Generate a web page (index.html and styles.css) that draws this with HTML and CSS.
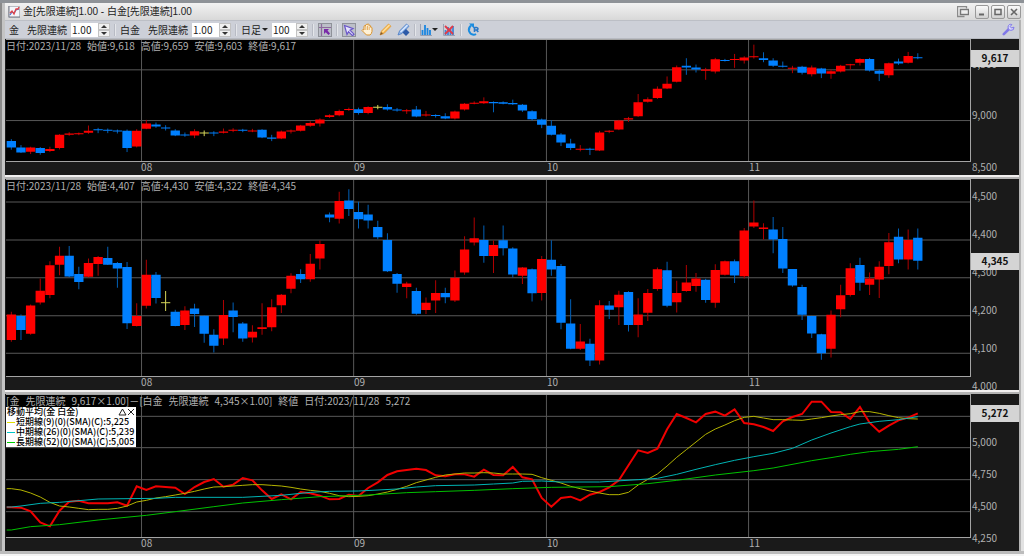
FILE: index.html
```html
<!DOCTYPE html>
<html lang="ja">
<head>
<meta charset="utf-8">
<title>金[先限連続]1.00 - 白金[先限連続]1.00</title>
<link rel="stylesheet" href="styles.css">
</head>
<body>
<div class="window">
  <header class="titlebar">
    <svg class="app-icon" width="12" height="12" viewBox="0 0 12 12"><rect x="0.5" y="0.5" width="11" height="11" fill="#f4f6fa" stroke="#b9bcc4"/><path d="M1 0v11h11" fill="none" stroke="#777b85"/><path d="M2 9l2-3 2 1 2-3 3-1" fill="none" stroke="#4a6fd0" stroke-width="1.2"/><path d="M2 7l2-2 2 3 2-5 2 0 1-2" fill="none" stroke="#e0454a" stroke-width="1.3"/></svg>
    <h1 class="title">金[先限連続]1.00 - 白金[先限連続]1.00</h1>
    <button class="pop-button" aria-label="別ウィンドウ"><svg width="12" height="12" viewBox="0 0 12 12"><path d="M7.500 10.500h-7V.5h9v2" fill="none" stroke="#8a8a8a" stroke-width="1.300"/><rect x="3.500" y="3.500" width="8" height="5" fill="#eee" stroke="#777" stroke-width="1.400"/></svg></button>
    <div class="window-buttons">
      <button class="window-button" aria-label="最小化"><svg width="10" height="10" viewBox="0 0 10 10"><path d="M2 7.500h5" stroke="#666" stroke-width="2"/></svg></button>
      <button class="window-button" aria-label="最大化"><svg width="10" height="10" viewBox="0 0 10 10"><rect x="2" y="2.500" width="6" height="5" fill="none" stroke="#666" stroke-width="1.500"/></svg></button>
      <button class="window-button" aria-label="閉じる"><svg width="10" height="10" viewBox="0 0 10 10"><path d="M2 2l6 6M8 2l-6 6" stroke="#666" stroke-width="1.600"/></svg></button>
    </div>
  </header>

  <div class="toolbar">
    <span class="label">金</span>
    <label class="label" for="ratio-a">先限連続</label>
    <span class="stepper"><input id="ratio-a" type="text" value="1.00"><span class="steps"><button aria-label="増やす" class="step up"></button><button aria-label="減らす" class="step down"></button></span></span>
    <i class="divider"></i>
    <span class="label">白金</span>
    <label class="label" for="ratio-b">先限連続</label>
    <span class="stepper"><input id="ratio-b" type="text" value="1.00"><span class="steps"><button aria-label="増やす" class="step up"></button><button aria-label="減らす" class="step down"></button></span></span>
    <i class="divider"></i>
    <span class="period"><select aria-label="足種"><option>日足</option></select></span>
    <span class="stepper count"><input aria-label="本数" type="text" value="100"><span class="steps"><button aria-label="増やす" class="step up"></button><button aria-label="減らす" class="step down"></button></span></span>
    <i class="divider"></i>
    <button class="tool pressed" aria-label="十字線"><svg width="12" height="12" viewBox="0 0 12 12"><path d="M2.500 0v12M0 3.500h12" stroke="#8d6a9c" stroke-width="1.200"/><path d="M5 5h5l-1.500 1.500L11 9.500 9.500 11 6.700 8.200 5 10z" fill="#7a2aa8"/></svg></button>
    <i class="divider"></i>
    <button class="tool pressed" aria-label="選択"><svg width="12" height="12" viewBox="0 0 12 12"><path d="M1.500 1.500l8.500 3.200-3 1.500 4 4-1.500 1.500-4-4L4 10.500z" fill="#e6e4ff" stroke="#6a56c8" stroke-width="1.200"/></svg></button>
    <button class="tool" aria-label="移動"><svg width="13" height="13" viewBox="0 0 13 13"><path d="M3 7V3.200q.8-1 1.500 0V2q.9-1.200 1.700 0V1.300q1-1 1.700.2v1q1-.8 1.700.3v1.400q1.200-.4 1.400.8v3.500q-.5 2.500-2 3.500H5.500Q3.500 10 1 7.500q.5-1.700 2-.5z" fill="#fff2d8" stroke="#d9932e"/><path d="M4.800 3.500V7M6.500 3v4M8.200 3.500V7" stroke="#dfa04a" stroke-width=".8"/></svg></button>
    <button class="tool" aria-label="描画"><svg width="13" height="13" viewBox="0 0 13 13"><path d="M1 12l1.500-4L9.500 1 12 3.300 5 10.500z" fill="#f6b54a" stroke="#e09a3a" stroke-width=".8"/><path d="M3.500 9L10.500 2" stroke="#ffe0a0" stroke-width="1.200"/><path d="M1 12l1-3 2 1.800z" fill="#805a30"/></svg></button>
    <button class="tool" aria-label="線の編集"><svg width="13" height="13" viewBox="0 0 13 13"><path d="M1 12l1.500-4L9.500 1 12 3.300 5 10.500z" fill="#8eb4e8" stroke="#4b7cc4" stroke-width=".8"/><path d="M3.500 9L10.500 2" stroke="#dceaff" stroke-width="1.200"/><path d="M9 6l3.500 3.500L9 13 5.500 9.500z" fill="#2c5aa8"/></svg></button>
    <i class="divider"></i>
    <button class="tool menu" aria-label="指標"><svg width="12" height="12" viewBox="0 0 12 12"><path d="M.5 0v11.500H12" fill="none" stroke="#9aa0b0"/><path d="M2.500 11V6M5 11V1M7.500 11V4M10 11V6" stroke="#1b86e0" stroke-width="1.800"/></svg></button>
    <button class="tool" aria-label="指標の削除"><svg width="12" height="12" viewBox="0 0 12 12"><path d="M.5 0v11.500H12" fill="none" stroke="#9aa0b0"/><path d="M2.500 11V6M5 11V3M7.500 11V5M10 11V2" stroke="#3f86d8" stroke-width="1.800"/><path d="M2 2l8 8M10 2l-8 8" stroke="#e03a48" stroke-width="1.800"/></svg></button>
    <i class="divider"></i>
    <button class="tool" aria-label="更新"><svg width="13" height="13" viewBox="0 0 13 13"><path d="M4 2.500Q1.200 5 2 8q1.200 3.500 4.500 3.700 1.500 0 2.500-.7" fill="none" stroke="#1a8ce0" stroke-width="2"/><path d="M2 .5h5v5z" fill="#1a8ce0"/><path d="M7.500 9V4.500h2q1.500.2 1.500 1.300T9.500 7h-2M9.500 7l1.800 2" fill="none" stroke="#2878c8" stroke-width="1.600"/></svg></button>
    <button class="tool settings" aria-label="設定"><svg width="13" height="13" viewBox="0 0 13 13"><path d="M1.800 11.200L7 6" stroke="#8078e8" stroke-width="2.600" stroke-linecap="round"/><path d="M9.800 1.500A3 3 0 1 0 12 4.200L9.500 5 8.200 3.600z" fill="#d8d6ff" stroke="#8078e8"/></svg></button>
  </div>

  <main class="panels">
    <section class="panel gold">
      <div class="plot">
        <svg class="chart" id="gold" viewBox="0 -60 2895 365" preserveAspectRatio="none"></svg>
        <p class="info"><span>日付:2023/11/28</span><span>始値:9,618</span><span>高値:9,659</span><span>安値:9,603</span><span>終値:9,617</span></p>
      </div>
      <div class="axis"><span>9,500</span><span>9,000</span><span>8,500</span><b class="tag">9,617</b></div>
      <div class="months"><span>08</span><span>09</span><span>10</span><span>11</span></div>
    </section>
    <div class="splitter"></div>
    <section class="panel platinum">
      <div class="plot">
        <svg class="chart" id="platinum" viewBox="0 9 2895 595" preserveAspectRatio="none"></svg>
        <p class="info"><span>日付:2023/11/28</span><span>始値:4,407</span><span>高値:4,430</span><span>安値:4,322</span><span>終値:4,345</span></p>
      </div>
      <div class="axis"><span>4,500</span><span>4,400</span><span>4,300</span><span>4,200</span><span>4,100</span><span>4,000</span><b class="tag">4,345</b></div>
      <div class="months"><span>08</span><span>09</span><span>10</span><span>11</span></div>
    </section>
    <div class="splitter"></div>
    <section class="panel spread">
      <div class="plot">
        <svg class="chart" id="spread" viewBox="0 14 2895 426" preserveAspectRatio="none"></svg>
        <p class="info"><span>[金</span><span>先限連続</span><span>9,617×1.00]－[白金</span><span>先限連続</span><span>4,345×1.00]</span><span>終値</span><span>日付:2023/11/28</span><span>5,272</span></p>
        <div class="legend">
          <div class="legend-head"><span>移動平均(金 白金)</span><span class="legend-buttons"><button aria-label="たたむ"><svg width="9" height="8" viewBox="0 0 9 8"><path d="M4.500 1L8 7H1z" fill="none" stroke="#222"/></svg></button><button aria-label="消す"><svg width="8" height="8" viewBox="0 0 8 8"><path d="M1 1l6 6M7 1L1 7" stroke="#222"/></svg></button></span></div>
          <div class="legend-row short">短期線(9)(0)(SMA)(C):5,225</div>
          <div class="legend-row middle">中期線(26)(0)(SMA)(C):5,239</div>
          <div class="legend-row long">長期線(52)(0)(SMA)(C):5,005</div>
        </div>
      </div>
      <div class="axis"><span>5,250</span><span>5,000</span><span>4,750</span><span>4,500</span><span>4,250</span><b class="tag">5,272</b></div>
      <div class="months"><span>08</span><span>09</span><span>10</span><span>11</span></div>
    </section>
  </main>
</div>
<script src="charts.js"></script>
</body>
</html>
```
FILE: styles.css
```css
* { box-sizing: border-box; }

body {
  margin: 0;
  background: #fff;
  font-family: "Noto Sans CJK JP", sans-serif;
  font-size: 10px;
  line-height: 12px;
}

button {
  margin: 0;
  padding: 0;
  border: 0;
  background: none;
  font: inherit;
}

svg { display: block; }

.window {
  display: flex;
  flex-direction: column;
  height: 100vh;
  min-height: 400px;
  padding: 0 5px 5px;
  border-top: 3px solid #8e9297;
  background:
    linear-gradient(#bcbcbc 0 3px, #f4f4f4 3px) bottom / 100% 5px no-repeat,
    linear-gradient(90deg, #8a8a8a 0 2px, #c4c4c4 2px 5px, #dcdcdc 5px calc(100% - 5px), #b4b4b4 calc(100% - 5px) calc(100% - 3px), #e2e2e2 calc(100% - 3px));
}

.titlebar {
  display: flex;
  align-items: center;
  flex: none;
  height: 17px;
  margin-right: -2px;
  padding-left: 3px;
  background: linear-gradient(#f2f2f2, #d8d8d8);
}

.title {
  flex: 1;
  margin: 0 0 0 3px;
  color: #222;
  font-family: "Liberation Sans", "Noto Sans CJK JP", sans-serif;
  font-size: 10px;
  font-weight: 400;
}

.pop-button { margin-right: 6px; }
.window-buttons { display: flex; gap: 2px; }

.window-button {
  display: grid;
  place-items: center;
  width: 14px;
  height: 14px;
  border: 1px solid #999;
  border-radius: 2px;
  background: linear-gradient(#fafafa, #d0d0d0);
}

.toolbar {
  display: flex;
  align-items: center;
  flex: none;
  gap: 4px;
  height: 19px;
  padding: 0 4px;
  border-top: 1px solid #bcbfc6;
  border-bottom: 1px solid #b8bbc2;
  background: #cdd0d8;
  color: #222;
}

.toolbar .label + .label { margin-left: 4px; }
.toolbar > * { flex: none; }

.divider {
  width: 2px;
  height: 12px;
  border-left: 1px solid #b8bbc4;
  background: #e4e6ea;
}

.stepper {
  display: flex;
  width: 39px;
  height: 14px;
  background: #fff;
}

.stepper.count { width: 36px; }

.stepper input {
  flex: 1;
  min-width: 0;
  padding: 0 1px;
  border: 0;
  background: #fff;
  color: #222;
  font: 10px/12px "Noto Sans CJK JP", sans-serif;
}

.steps {
  display: flex;
  flex-direction: column;
  width: 12px;
}

.step {
  display: grid;
  flex: 1;
  place-items: center;
  border: 1px solid #c2c2c2;
  background: #f0f0f0;
}

.step::before {
  border: 3px solid transparent;
  border-top-width: 0;
  border-bottom: 3px solid #333;
  content: "";
}

.step.down::before { transform: rotate(180deg); }

.period {
  display: flex;
  align-items: center;
  gap: 1px;
}

.period::after,
.menu::after {
  border: 3px solid transparent;
  border-top-color: #222;
  border-bottom-width: 0;
  content: "";
}

.period select {
  width: 20px;
  padding: 0;
  border: 0;
  appearance: none;
  background: none;
  color: #222;
  font: inherit;
}

.tool {
  display: grid;
  place-items: center;
  width: 14px;
  height: 14px;
}

.tool.pressed {
  border: 1px solid #8f9299;
  background: #bcbfc8;
}

.menu {
  grid-auto-flow: column;
  width: 18px;
}

.settings { margin-left: auto; }

.panels {
  display: flex;
  flex: 1;
  flex-direction: column;
  min-height: 0;
}

.panel {
  display: grid;
  grid-template-rows: minmax(0, 1fr) 13px;
  grid-template-columns: minmax(0, 1fr) 48px;
  min-height: 0;
  overflow: hidden;
  border-left: 1px solid #1a1a1a;
  background: #1a1a1a;
  color: #b0b0b0;
}

.gold { flex: 136 1 0; }
.platinum { flex: 211 1 0; }
.spread { flex: 157 1 0; }

.splitter {
  flex: none;
  height: 4px;
  border-bottom: 2px solid #b4b4b4;
  background: #f2f0f0;
}

.plot {
  position: relative;
  min-height: 0;
  border: 1px solid #a4a4a4;
  border-left: 0;
  background: #000;
}

.chart {
  width: 100%;
  height: 100%;
}

.grid-line,
.month-line {
  fill: none;
  stroke: #585858;
  vector-effect: non-scaling-stroke;
}

.wick { fill: none; vector-effect: non-scaling-stroke; }
.wick.up { stroke: #b00000; }
.wick.down { stroke: #0060b8; }
.wick.even { stroke: #d6d65a; }
.body.up { fill: #f00; }
.body.down { fill: #0080ff; }
.body.even { fill: #d6d65a; }

.line { fill: none; vector-effect: non-scaling-stroke; }
.line.price { stroke: #f00000; stroke-width: 2px; }
.line.short { stroke: #b4b400; }
.line.middle { stroke: #00b4b4; }
.line.long { stroke: #00c000; }

.info {
  position: absolute;
  top: 0;
  left: 0;
  display: flex;
  gap: 6px;
  margin: 0;
  line-height: 11px;
}

.axis {
  position: relative;
  display: grid;
  grid-row: 1 / 3;
  grid-column: 2;
  align-items: end;
  padding-left: 1px;
  white-space: nowrap;
}

.gold .axis { grid-template-rows: 31fr 51fr 52fr 2fr; }
.platinum .axis { grid-template-rows: 11% repeat(5, 18%); }
.spread .axis { grid-template-rows: 22fr repeat(4, 32fr) 7fr; }

.tag {
  position: absolute;
  right: 0;
  left: 0;
  height: 17px;
  background: #d4d4d4;
  color: #111;
  line-height: 16px;
  text-align: center;
}

.gold .tag { top: 8%; }
.platinum .tag { top: 35%; }
.spread .tag { top: 7%; }

.months {
  display: grid;
  grid-template-columns: 213fr 193fr 202fr 222fr;
  margin-left: 14%;
  line-height: 10px;
}

.legend {
  position: absolute;
  top: 12px;
  left: 0;
  width: 130px;
  padding: 0 1px;
  background: #fff;
  color: #000;
  font-size: 9px;
  font-weight: 500;
  line-height: 10px;
  white-space: nowrap;
}

.legend-head {
  display: flex;
  justify-content: space-between;
}

.legend-buttons { display: flex; }

.legend-row {
  display: flex;
  align-items: center;
  gap: 1px;
}

.legend-row::before {
  width: 8px;
  height: 1px;
  content: "";
}

.legend-row.short::before { background: #e0e000; }
.legend-row.middle::before { background: #00c8c8; }
.legend-row.long::before { background: #00d000; }
```
FILE: charts.js
```js
// Chart units: one day is STEP wide, y grows downwards.
const STEP = 28.96, FIRST = 16, WIDTH = 2895;
const MONTHS = [407, 1044, 1623, 2230];
const KIND = { r: "up", b: "down", y: "even" };
const dayX = i => FIRST + STEP * i;

// One candle per entry: kind, body top, body bottom, high, low.
const gold = `b 245 264 239 271,b 264 279 257 281,r 264 277 262 284,b 266 281 263 286,r 269 275 262 278,r 226 266 224 270,r 222 226 218 229,r 221 223 219 227,r 214 220 198 223,b 209 212 205 221,b 211 213 207 221,b 213 215 210 222,b 214 266 210 278,r 214 261 209 264,r 192 208 181 209,b 195 201 189 205,b 204 206 197 213,b 213 228 209 230,b 225 228 219 232,r 215 228 209 236,y 219 221 213 230,b 219 222 215 230,r 216 220 207 222,r 211 213 206 218,b 211 213 208 218,r 213 215 208 218,b 211 234 209 236,b 234 238 226 245,r 216 237 213 239,r 213 216 210 222,r 198 214 196 216,r 190 199 185 202,r 180 192 176 201,r 167 172 164 175,r 154 167 150 170,r 148 151 144 154,b 149 160 144 165,r 142 160 140 164,y 141 143 136 149,b 142 150 134 153,b 150 153 145 156,r 152 155 148 163,b 150 171 139 173,r 165 167 154 171,b 166 169 164 174,b 170 177 161 179,r 156 177 153 180,r 132 150 130 153,r 129 131 125 134,r 125 131 113 133,b 127 131 125 158,b 128 132 125 134,b 130 134 120 136,b 135 153 133 157,b 155 179 152 183,b 180 196 177 206,b 199 226 182 228,b 225 249 221 260,b 252 266 238 272,r 268 271 257 276,b 268 271 265 287,r 219 273 214 275,r 214 216 212 221,r 183 210 181 212,r 176 180 172 187,r 128 170 103 172,r 119 126 113 129,r 87 115 80 118,r 72 86 50 88,r 22 66 17 68,b 18 23 -5 45,b 23 29 14 38,r 29 33 24 60,r -2 35 -6 41,b 0 3 -3 5,r -3 0 -18 24,r -7 2 -11 11,r -11 -8 -46 -4,b -5 0 -23 7,b 2 18 -5 21,b 18 21 5 23,r 24 27 18 40,b 21 39 18 44,r 23 43 17 50,b 26 41 24 55,r 34 42 29 57,r 18 35 15 38,r 13 16 12 29,r -3 9 -5 17,b -3 32 -6 35,b 33 42 29 64,r 10 46 8 54,b 5 11 -4 15,r -12 9 -24 11,b -8 -5 -20 -2`;

const platinum = `r 417 495 409 500,b 422 464 417 495,r 390 476 387 479,r 345 381 308 387,r 268 358 256 368,r 239 266 212 298,b 239 302 209 304,b 294 319 272 341,r 261 303 247 305,r 243 264 240 300,b 246 266 212 267,b 261 278 258 336,b 273 444 258 461,r 422 452 383 454,r 297 391 251 399,b 297 367 288 384,y 380 382 346 407,b 409 452 403 453,r 405 449 392 464,b 399 416 385 455,b 421 476 420 503,b 479 512 462 533,r 419 490 373 510,b 405 425 381 471,b 445 490 440 500,r 470 487 450 502,r 456 461 383 479,r 395 456 371 468,r 357 389 355 413,r 300 339 292 353,b 294 310 280 322,r 263 310 234 318,r 203 247 193 281,b 114 123 108 137,r 73 127 45 141,b 71 97 37 118,b 106 128 75 156,b 114 132 84 156,b 152 183 133 189,b 191 286 171 288,b 294 324 291 351,r 323 334 318 368,b 346 415 336 418,r 382 404 366 416,r 352 375 313 413,b 352 365 336 383,r 306 375 284 379,r 220 290 180 297,r 186 199 123 208,b 191 240 147 260,r 206 240 193 291,b 192 216 147 238,b 217 296 213 305,r 275 300 273 325,b 280 353 278 378,r 249 352 240 375,b 251 281 192 300,b 270 442 264 462,b 445 521 371 523,r 499 521 446 525,b 506 557 491 574,r 389 557 374 569,b 390 403 376 431,r 357 395 345 449,b 349 449 347 469,r 417 449 368 486,r 352 412 340 437,r 280 340 275 345,b 283 391 257 395,r 352 380 315 411,r 320 346 267 348,r 308 331 291 348,b 312 373 309 382,r 282 382 265 397,r 256 297 253 299,b 256 299 250 322,r 162 301 155 308,r 138 150 71 155,r 153 158 140 190,b 159 190 121 231,b 188 278 152 291,b 279 329 279 333,b 334 418 327 434,b 422 475 421 489,b 477 535 476 555,r 418 521 405 548,r 359 401 327 426,r 277 358 262 363,b 267 321 245 345,r 308 327 290 358,r 272 311 256 367,r 198 270 170 295,b 181 250 156 262,r 191 250 159 281,b 184 254 156 281`;

// One value per day.
const price = [351,352,363,396,408,361,334,331,339,339,339,336,346,288,299,288,290,292,311,290,275,266,289,283,263,270,300,326,312,327,305,309,316,327,326,313,317,293,276,254,243,239,235,239,255,258,252,252,259,238,254,255,230,261,267,323,349,323,319,330,313,305,291,270,225,180,188,175,117,71,83,96,71,64,76,57,98,102,110,122,93,80,71,34,34,65,66,86,50,97,124,106,90,82,69];
const shortAverage = [295,299,308,320,336,347,350,354,358,357,357,354,347,335,330,323,319,314,309,303,296,290,289,287,285,283,283,285,287,291,296,300,303,309,316,319,318,316,311,305,297,288,277,269,261,254,251,248,248,247,248,251,251,251,252,262,270,278,288,295,302,308,313,313,306,284,267,251,227,201,178,155,132,116,104,91,81,78,83,88,88,89,90,86,82,77,73,70,64,64,69,76,82,85,86];

// Slow averages: day and value at each bend.
const middleAverage = [[0,350],[1,347],[3,339],[5,336],[9,326],[15,324],[17,321],[24,321],[28,315],[31,306],[33,303],[36,302],[40,296],[42,290],[44,286],[48,284],[50,281],[52,278],[53,273],[55,272],[57,275],[61,275],[65,268],[67,264],[69,252],[71,237],[73,223],[75,210],[77,199],[79,189],[81,174],[83,149],[85,128],[87,109],[88,101],[90,93],[92,88],[94,79]];
const longAverage = [[0,419],[2,409],[5,403],[9,389],[14,375],[17,364],[21,349],[24,338],[28,328],[32,319],[34,317],[37,314],[41,307],[44,304],[48,300],[52,295],[56,291],[62,289],[66,280],[69,270],[73,254],[77,241],[79,233],[83,211],[85,202],[87,192],[89,184],[92,177],[94,169]];

const path = (cls, d) => `<path class="${cls}" d="${d}"/>`;

function grid(levels) {
  return path("grid-line", levels.map(y => `M0 ${y}H${WIDTH}`).join("")) +
    path("month-line", MONTHS.map(x => `M${x} -60V620`).join(""));
}

function candles(text) {
  const wicks = { r: "", b: "", y: "" }, bodies = { r: "", b: "", y: "" };
  text.split(",").forEach((entry, i) => {
    const [kind, ...values] = entry.split(" ");
    const [top, bottom, high, low] = values.map(Number);
    const x = dayX(i);
    wicks[kind] += `M${x} ${high}V${low}`;
    bodies[kind] += `M${x - 14} ${top}h28V${Math.max(bottom, top + 3)}h-28z`;
  });
  return ["r", "b", "y"].map(k =>
    path(`wick ${KIND[k]}`, wicks[k]) + path(`body ${KIND[k]}`, bodies[k])).join("");
}

function line(cls, points) {
  return path(`line ${cls}`, `M2 ${points[0][1]}L` + points.map(([i, y]) => `${dayX(i)} ${y}`).join(" "));
}

const daily = values => values.map((y, i) => [i, y]);

document.getElementById("gold").innerHTML = grid([30, 183]) + candles(gold);
document.getElementById("platinum").innerHTML = grid([76, 191, 306, 421, 535]) + candles(platinum);
document.getElementById("spread").innerHTML = grid([78, 172, 268, 364]) +
  line("price", daily(price)) + line("short", daily(shortAverage)) +
  line("middle", middleAverage) + line("long", longAverage);
```
